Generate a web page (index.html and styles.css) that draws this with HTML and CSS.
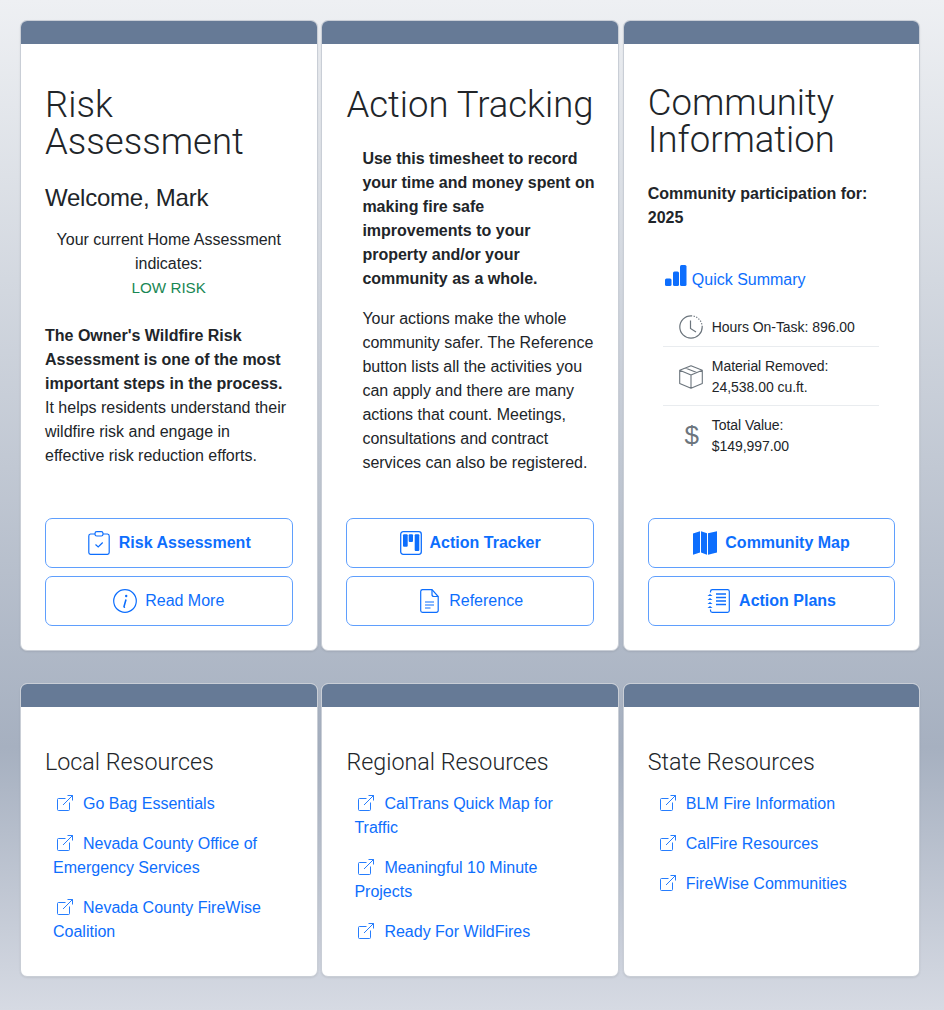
FILE: index.html
```html
<!DOCTYPE html>
<html lang="en">
<head>
<meta charset="utf-8">
<title>Dashboard</title>
<link rel="stylesheet" href="styles.css">
</head>
<body>
<svg class="sprite" width="0" height="0" aria-hidden="true">
  <symbol id="ext" viewBox="0 0 16 16"><path fill="none" stroke="currentColor" stroke-width=".9" d="M8.500 3.500H1.500a1 1 0 0 0-1 1v10a1 1 0 0 0 1 1h10a1 1 0 0 0 1-1V7.500M6 10 15.500.5M10.500.5h5v5"/></symbol>
</svg>
<main class="page">
  <section class="grid top">
    <article class="card">
      <div class="bar"></div>
      <div class="body">
        <h1 class="title">Risk Assessment</h1>
        <h2 class="welcome">Welcome, Mark</h2>
        <p class="status">Your current Home Assessment indicates:<br><span class="low">LOW RISK</span></p>
        <p class="intro"><b>The Owner's Wildfire Risk Assessment is one of the most important steps in the process.</b> It helps residents understand their wildfire risk and engage in effective risk reduction efforts.</p>
        <div class="actions">
          <a class="btn strong"><svg width="24" height="24" viewBox="0 0 24 24" fill="none" stroke="currentColor" stroke-width="1.200"><path d="M8 3H3.500A2 2 0 0 0 1.800 5V21.500A1.800 1.800 0 0 0 3.500 23.300H20.500A1.800 1.800 0 0 0 22.200 21.500V5A2 2 0 0 0 20.500 3H16"/><rect x="8" y=".7" width="8" height="4.300" rx="1.800"/><path d="m8.500 13.500 2.700 2.500 4.500-4.500"/></svg>Risk Assessment</a>
          <a class="btn"><svg width="24" height="24" viewBox="0 0 24 24" fill="none" stroke="currentColor" stroke-width="1.200"><circle cx="12" cy="12" r="11.300"/><path d="M13 10.500 11 17.500q0 .8 1 .5" stroke-width="1.600"/><circle cx="13.200" cy="7" r="1.200" fill="currentColor" stroke="none"/></svg>Read More</a>
        </div>
      </div>
    </article>
    <article class="card">
      <div class="bar"></div>
      <div class="body">
        <h1 class="title">Action Tracking</h1>
        <div class="indent">
          <p class="lead">Use this timesheet to record your time and money spent on making fire safe improvements to your property and/or your community as a whole.</p>
          <p class="copy">Your actions make the whole community safer. The Reference button lists all the activities you can apply and there are many actions that count. Meetings, consultations and contract services can also be registered.</p>
        </div>
        <div class="actions">
          <a class="btn strong"><svg width="22" height="24" viewBox="0 0 22 24" fill="currentColor"><rect x=".7" y=".7" width="20.600" height="22.600" rx="2.500" fill="none" stroke="currentColor" stroke-width="1.300"/><rect x="3" y="3.300" width="4.700" height="12.500" rx="1"/><rect x="8.700" y="3.300" width="4.300" height="7.700" rx="1"/><rect x="14.700" y="3.300" width="4.600" height="16.700" rx="1"/></svg>Action Tracker</a>
          <a class="btn"><svg width="24" height="24" viewBox="0 0 24 24" fill="none" stroke="currentColor" stroke-width="1.200"><path d="M5.500 .7H15L21.200 7.500V21.500A1.800 1.800 0 0 1 19.400 23.300H5.500A1.800 1.800 0 0 1 3.700 21.500V2.500A1.800 1.800 0 0 1 5.500 .7Z"/><path d="M15 .7V5.500A2 2 0 0 0 17 7.500H21.200M8 13H17M8 16H17M8 19H13.500"/></svg>Reference</a>
        </div>
      </div>
    </article>
    <article class="card">
      <div class="bar"></div>
      <div class="body">
        <h1 class="title tight">Community Information</h1>
        <p class="lead">Community participation for: 2025</p>
        <h3 class="summary"><svg width="22" height="22" viewBox="0 0 22 22" fill="currentColor"><rect x="0" y="13.500" width="6.500" height="7.500" rx="1.500"/><rect x="8" y="6.500" width="6" height="14.500" rx="1.500"/><rect x="15" y="0" width="6.500" height="21" rx="1.500"/></svg>Quick Summary</h3>
        <ul class="stats">
          <li><svg width="24" height="24" viewBox="0 0 24 24" fill="none" stroke="currentColor" stroke-width="1.200"><path d="M12 .8A11.200 11.200 0 1 0 23.200 12"/><path d="M12 .8A11.200 11.200 0 0 1 23.200 12" stroke-dasharray="1.200 1.500"/><path d="M11.500 5.500V13.500L17 17"/></svg><span>Hours On-Task: 896.00</span></li>
          <li><svg width="24" height="24" viewBox="0 0 24 24" fill="none" stroke="currentColor" stroke-width="1.100" stroke-linejoin="round"><path d="M12 .8 23.300 5.200V18.500L12 23.300 .7 18.500V5.200ZM.7 5.200 12 10 23.300 5.200M12 10V23.300M6.300 3 17.700 7.600"/></svg><span>Material Removed: 24,538.00 cu.ft.</span></li>
          <li><span class="dollar">$</span><span>Total Value:<br>$149,997.00</span></li>
        </ul>
        <div class="actions">
          <a class="btn strong"><svg width="24" height="24" viewBox="0 0 24 24" fill="currentColor"><path d="M0 2.500 7 .3V21.500L0 23.700ZM8 .3 14 2.200V23.700L8 21.500ZM15 2.200 24 .3V21.500L15 23.700Z"/></svg>Community Map</a>
          <a class="btn strong"><svg width="24" height="24" viewBox="0 0 24 24" fill="none" stroke="currentColor" stroke-width="1.200"><path d="M3.500 3.500V2.500A1.800 1.800 0 0 1 5.300.7H20.500A1.800 1.800 0 0 1 22.300 2.500V21.500A1.800 1.800 0 0 1 20.500 23.300H5.300A1.800 1.800 0 0 1 3.500 21.500V20.500"/><path stroke-width="1.400" d="M9 5H19M9 8.500H19M9 12H19M9 15.500H19"/><path fill="currentColor" stroke="none" d="M.5 7 3 5 5.500 7ZM.5 11 3 9 5.500 11ZM.5 15 3 13 5.500 15ZM.5 19 3 17 5.500 19Z"/></svg>Action Plans</a>
        </div>
      </div>
    </article>
  </section>
  <section class="grid bottom">
    <article class="card">
      <div class="bar"></div>
      <div class="body res">
        <h2 class="res-title">Local Resources</h2>
        <ul class="links">
          <li><a><svg class="ext" width="16" height="16"><use href="#ext"/></svg>Go Bag Essentials</a></li>
          <li><a><svg class="ext" width="16" height="16"><use href="#ext"/></svg>Nevada County Office of Emergency Services</a></li>
          <li><a><svg class="ext" width="16" height="16"><use href="#ext"/></svg>Nevada County FireWise Coalition</a></li>
        </ul>
      </div>
    </article>
    <article class="card">
      <div class="bar"></div>
      <div class="body res">
        <h2 class="res-title">Regional Resources</h2>
        <ul class="links">
          <li><a><svg class="ext" width="16" height="16"><use href="#ext"/></svg>CalTrans Quick Map for Traffic</a></li>
          <li><a><svg class="ext" width="16" height="16"><use href="#ext"/></svg>Meaningful 10 Minute Projects</a></li>
          <li><a><svg class="ext" width="16" height="16"><use href="#ext"/></svg>Ready For WildFires</a></li>
        </ul>
      </div>
    </article>
    <article class="card">
      <div class="bar"></div>
      <div class="body res">
        <h2 class="res-title">State Resources</h2>
        <ul class="links">
          <li><a><svg class="ext" width="16" height="16"><use href="#ext"/></svg>BLM Fire Information</a></li>
          <li><a><svg class="ext" width="16" height="16"><use href="#ext"/></svg>CalFire Resources</a></li>
          <li><a><svg class="ext" width="16" height="16"><use href="#ext"/></svg>FireWise Communities</a></li>
        </ul>
      </div>
    </article>
  </section>
</main>
</body>
</html>
```
FILE: styles.css
```css
* { box-sizing: border-box; }
html, body { margin: 0; height: 100%; }
body {
  font-family: "Liberation Sans", Arial, sans-serif;
  font-size: 16px;
  line-height: 24px;
  color: #212529;
  background: linear-gradient(180deg, #eef0f3 0%, #a6b0c0 74%, #d6dae3 100%);
}
.sprite { position: absolute; }
.page { padding: 20px 0 0 20px; }
.grid { display: grid; grid-template-columns: repeat(3, 297.5px); column-gap: 3.9px; }
.bottom { margin-top: 32px; }
.top .card { height: 631px; }
.bottom .card { height: 294px; }
.card {
  display: flex;
  flex-direction: column;
  background: #fff;
  border: 1px solid #c9ced6;
  border-radius: 7px;
  overflow: hidden;
  box-shadow: 0 1px 2px rgba(0,0,0,.08);
}
.bar { flex: none; height: 23px; background: #667a96; }
.body { flex: 1; display: flex; flex-direction: column; padding: 42px 24px 24px; }
.title { margin: 0 0 8px; font-family: Roboto, "Liberation Sans", sans-serif; font-size: 36.5px; line-height: 37px; font-weight: 300; }
.title.tight { margin-top: -2px; }
.welcome { margin: 15px 0 16px; font-size: 24px; line-height: 29px; font-weight: 400; letter-spacing: -.23px; }
.status { margin: 0 0 24px; text-align: center; }
.low { color: #198754; font-size: 15.2px; }
.intro { margin: 0; }
.indent { padding-left: 16px; margin-right: -2px; }
.lead { margin: 16px 0 16px; font-weight: 700; }
.copy { margin: 0; }
.actions { margin-top: auto; display: flex; flex-direction: column; gap: 8px; }
.btn {
  display: flex;
  align-items: center;
  justify-content: center;
  gap: 8px;
  height: 50px;
  border: 1px solid #5f9ffd;
  border-radius: 7px;
  color: #0d6efd;
}
.strong { font-weight: 700; }
.summary { display: flex; align-items: flex-start; gap: 5px; margin: 22px 0 0 17px; font-size: 16px; line-height: 24px; font-weight: 400; color: #0d6efd; }
.summary svg { flex: none; margin-top: -3px; }
.stats { list-style: none; margin: 16.5px 16px 0 15px; padding: 0; font-size: 14px; line-height: 21px; letter-spacing: -.05px; }
.stats li { display: flex; align-items: center; gap: 9px; padding: 9px 0 7px 16px; border-bottom: 1px solid #e9ecef; }
.stats li:first-child { padding: 8px 0 8px 16px; }
.stats li:last-child { border-bottom: 0; }
.stats svg { flex: none; margin-block: -2px; color: #6c757d; }
.dollar { flex: none; width: 24px; padding-left: 2px; text-align: center; font-size: 26px; color: #6c757d; }
.res { padding: 41px 24px 0; }
.res-title { margin: 0 0 15px; font-family: Roboto, "Liberation Sans", sans-serif; font-size: 23.3px; line-height: 29px; font-weight: 300; }
.links { list-style: none; margin: 0; padding: 0 0 0 8px; }
.links li { margin-bottom: 16px; }
.links a { color: #0d6efd; }
.ext { vertical-align: -2px; margin: 0 10px 0 4px; }
```
